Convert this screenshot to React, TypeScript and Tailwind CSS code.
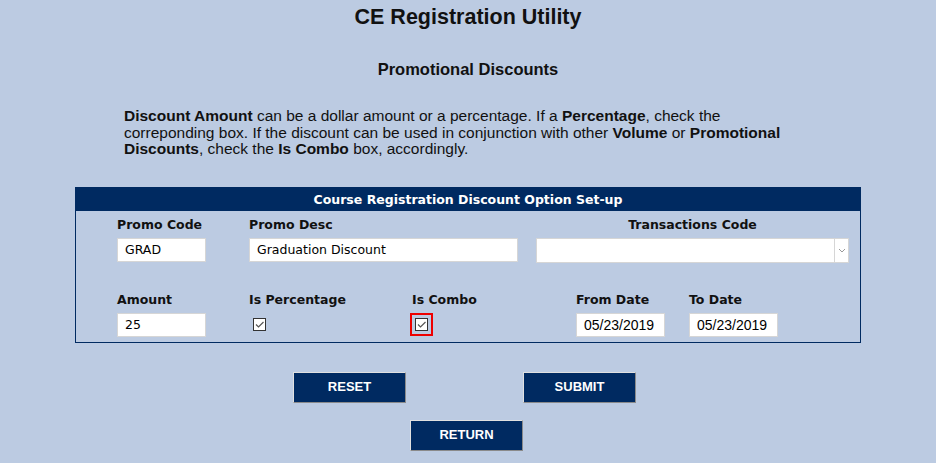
import React from 'react'

const arial = { fontFamily: '"Liberation Sans", Arial, sans-serif' }
const verdana = { fontFamily: '"DejaVu Sans", Verdana, sans-serif' }

function Label({ children, className = '' }: { children: React.ReactNode; className?: string }) {
  return (
    <div className={`text-[12.5px] font-bold leading-[16px] text-[#111] ${className}`} style={verdana}>
      {children}
    </div>
  )
}

function TextBox({ value, className = '', mono = false }: { value: string; className?: string; mono?: boolean }) {
  return (
    <div
      className={`h-[24px] bg-white border border-[#d6d6d6] pl-[7px] pt-[1px] flex items-center text-black ${className}`}
      style={mono ? { ...arial, fontSize: '14px' } : { ...verdana, fontSize: '12.5px' }}
    >
      {value}
    </div>
  )
}

function Check() {
  return (
    <div className="w-[13px] h-[13px] bg-white border border-[#333] flex items-center justify-center">
      <svg width="11" height="11" viewBox="0 0 11 11">
        <path d="M2 5.5 L4.5 8 L9.5 3" fill="none" stroke="#555" strokeWidth="1.2" />
      </svg>
    </div>
  )
}

function NavButton({ children }: { children: React.ReactNode }) {
  return (
    <button
      className="w-[113px] h-[31px] bg-[#002a61] text-white text-[13px] font-bold border border-t-[#e0e0e0] border-l-[#e0e0e0] border-b-[#8a8a8a] border-r-[#8a8a8a]"
      style={arial}
    >
      {children}
    </button>
  )
}

export default function App() {
  return (
    <div className="w-[936px] h-[463px] bg-[#bccbe2] overflow-hidden text-[#111]" style={arial}>
      <h1 className="pt-[4px] text-center text-[21.5px] font-bold leading-[26px]">CE Registration Utility</h1>
      <h2 className="mt-[28px] text-center text-[16.5px] font-bold leading-[22px]">Promotional Discounts</h2>

      <p className="mt-[28px] ml-[124px] w-[684px] text-[15.5px] leading-[16.5px]">
        <b>Discount Amount</b> can be a dollar amount or a percentage. If a <b>Percentage</b>, check the correponding box. If
        the discount can be used in conjunction with other <b>Volume</b> or <b>Promotional Discounts</b>, check the{' '}
        <b>Is Combo</b> box, accordingly.
      </p>

      <div className="mt-[29px] mx-auto w-[786px] h-[156px] border border-[#002a61]">
        <div className="h-[23px] bg-[#002a61] text-white text-center text-[12.5px] font-bold leading-[23px]" style={verdana}>
          Course Registration Discount Option Set-up
        </div>

        <div className="pl-[41px] pt-[6px] flex">
          <div className="w-[132px]">
            <Label>Promo Code</Label>
            <TextBox value="GRAD" className="mt-[5px] w-[89px]" />
          </div>
          <div className="w-[287px]">
            <Label>Promo Desc</Label>
            <TextBox value="Graduation Discount" className="mt-[5px] w-[269px]" />
          </div>
          <div className="w-[313px]">
            <Label className="text-center">Transactions Code</Label>
            <div className="mt-[5px] h-[25px] w-[313px] bg-white border border-[#d6d6d6] flex justify-end">
              <div className="w-[14px] border-l border-[#d6d6d6] flex items-center justify-center">
                <svg width="8" height="5" viewBox="0 0 8 5">
                  <path d="M1 1 L4 4 L7 1" fill="none" stroke="#999" strokeWidth="1" />
                </svg>
              </div>
            </div>
          </div>
        </div>

        <div className="pl-[41px] pt-[29px] flex">
          <div className="w-[132px]">
            <Label>Amount</Label>
            <TextBox value="25" className="mt-[5px] w-[89px]" />
          </div>
          <div className="w-[163px]">
            <Label>Is Percentage</Label>
            <div className="mt-[10px] pl-[4px]">
              <Check />
            </div>
          </div>
          <div className="w-[164px]">
            <Label>Is Combo</Label>
            <div className="mt-[5px] -ml-[2px] w-[23px] h-[23px] border-2 border-[#ee0000] flex items-center justify-center">
              <Check />
            </div>
          </div>
          <div className="w-[113px]">
            <Label>From Date</Label>
            <TextBox value="05/23/2019" mono className="mt-[5px] w-[89px]" />
          </div>
          <div className="w-[89px]">
            <Label>To Date</Label>
            <TextBox value="05/23/2019" mono className="mt-[5px] w-[89px]" />
          </div>
        </div>
      </div>

      <div className="mt-[29px] flex justify-center gap-[117px] pr-[7px]">
        <NavButton>RESET</NavButton>
        <NavButton>SUBMIT</NavButton>
      </div>
      <div className="mt-[17px] flex justify-center pr-[3px]">
        <NavButton>RETURN</NavButton>
      </div>
    </div>
  )
}
